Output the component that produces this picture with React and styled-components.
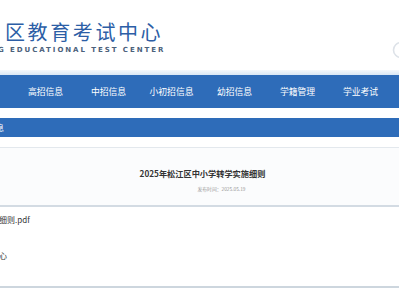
import React from "react";
import styled, { createGlobalStyle } from "styled-components";

const Global = createGlobalStyle`
  html, body { margin: 0; padding: 0; background: #fff; overflow: hidden; }
  body { font-family: "Noto Sans CJK SC", "Noto Sans", sans-serif; color: #333; }
`;

const Page = styled.div`
  width: 399px;
  height: 300px;
  overflow: hidden;
  display: flex;
  flex-direction: column;
`;

const Header = styled.header`
  height: 70px;
  display: flex;
  align-items: flex-start;
  justify-content: space-between;
  overflow: hidden;
`;

const Logo = styled.div`
  display: flex;
  flex-direction: column;
  padding-top: 19px;
`;

const LogoTitle = styled.div`
  margin-left: 5px;
  font-family: "Noto Sans CJK SC", serif;
  font-weight: 400;
  font-size: 20px;
  line-height: 26px;
  letter-spacing: 2.6px;
  color: #2c5ea6;
  white-space: nowrap;
`;

const LogoSub = styled.div`
  margin-left: -2px;
  margin-top: 1px;
  font-family: "DejaVu Sans", sans-serif;
  font-weight: bold;
  font-size: 7px;
  line-height: 9px;
  letter-spacing: 1.95px;
  color: #4b617b;
  white-space: nowrap;
`;

const Emblem = styled.svg`
  margin-top: 41px;
  margin-right: -12px;
  flex: none;
`;

const Strip = styled.div`
  height: 5px;
  background: linear-gradient(#f4f8fc, #d9e7f5);
`;

const Nav = styled.nav`
  height: 33px;
  background: #2e6cb9;
  display: flex;
  align-items: center;
  padding-left: 14px;
`;

const NavItem = styled.a`
  width: 63px;
  flex: none;
  text-align: center;
  color: #fff;
  font-size: 8.8px;
  line-height: 12px;
  text-decoration: none;
  white-space: nowrap;
`;

const Crumb = styled.div`
  margin-top: 10px;
  height: 19px;
  background: #2e6cb9;
  display: flex;
  align-items: center;
  overflow: hidden;
`;

const CrumbText = styled.span`
  margin-left: -12px;
  color: #fff;
  font-size: 8px;
  line-height: 10px;
  white-space: nowrap;
`;

const Divider = styled.div`
  margin-top: 10px;
  height: 1px;
  background: #e3e8ed;
`;

const Card = styled.section`
  height: 59px;
  background: #fbfcfd;
  border-bottom: 2px solid #d3dbe3;
  display: flex;
  flex-direction: column;
  align-items: center;
  padding-top: 20px;
  padding-left: 6px;
  box-sizing: border-box;
`;

const Title = styled.h1`
  margin: 0;
  font-size: 8.2px;
  line-height: 10px;
  font-weight: bold;
  color: #333;
  white-space: nowrap;
`;

const Meta = styled.div`
  margin-top: 8px;
  padding-left: 38px;
  font-size: 4.8px;
  line-height: 6px;
  color: #999;
  white-space: nowrap;
`;

const Body = styled.div`
  height: 81px;
  display: flex;
  flex-direction: column;
  padding-top: 8px;
  box-sizing: border-box;
  border-bottom: 2px solid #cdd6de;
`;

const Line = styled.div`
  margin-left: ${(p) => p.$offset}px;
  margin-top: ${(p) => p.$gap}px;
  font-size: 8px;
  line-height: 10px;
  color: #333;
  white-space: nowrap;
`;

const items = ["高招信息", "中招信息", "小初招信息", "幼招信息", "学籍管理", "学业考试"];

export default function App() {
  return (
    <Page>
      <Global />
      <Header>
        <Logo>
          <LogoTitle>区教育考试中心</LogoTitle>
          <LogoSub>G EDUCATIONAL TEST CENTER</LogoSub>
        </Logo>
        <Emblem width="20" height="18" viewBox="0 0 20 18">
          <circle cx="10" cy="9" r="7.5" fill="none" stroke="#dde2e8" strokeWidth="1.6" />
        </Emblem>
      </Header>
      <Strip />
      <Nav>
        {items.map((t) => (
          <NavItem key={t}>{t}</NavItem>
        ))}
      </Nav>
      <Crumb>
        <CrumbText>信息</CrumbText>
      </Crumb>
      <Divider />
      <Card>
        <Title>2025年松江区中小学转学实施细则</Title>
        <Meta>发布时间：2025.05.19</Meta>
      </Card>
      <Body>
        <Line $offset={-1} $gap={0}>细则.pdf</Line>
        <Line $offset={-1} $gap={26}>心</Line>
      </Body>
    </Page>
  );
}
